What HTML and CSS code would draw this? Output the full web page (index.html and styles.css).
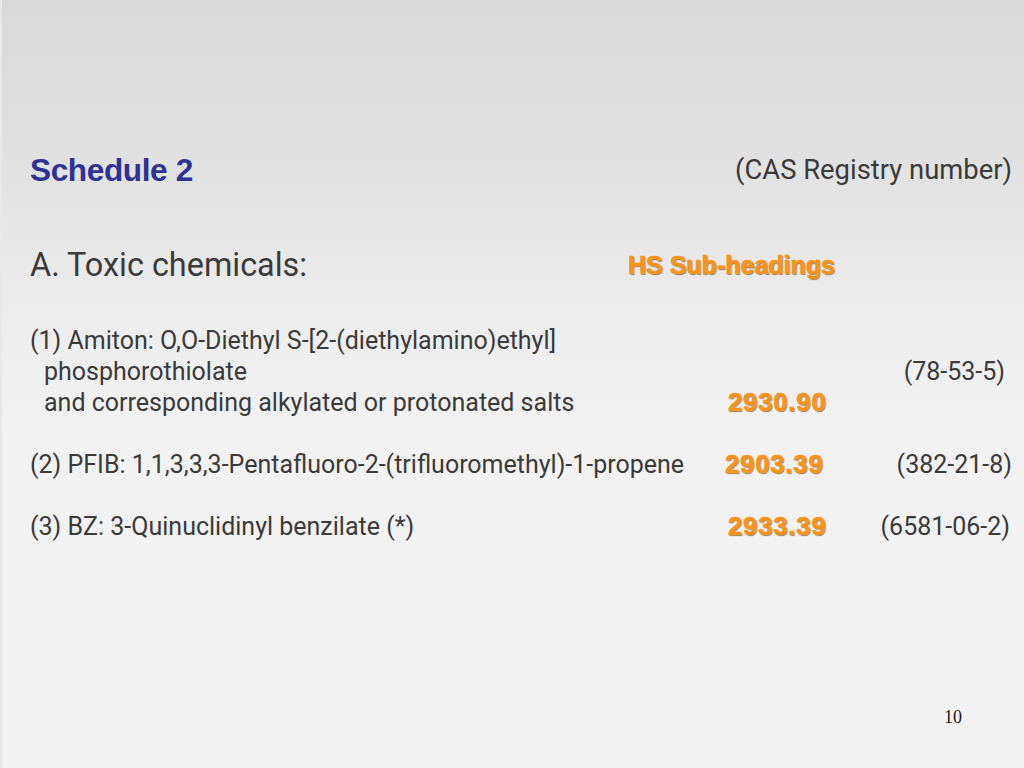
FILE: index.html
```html
<!DOCTYPE html>
<html lang="en">
<head>
<meta charset="utf-8">
<title>Schedule 2</title>
<link rel="stylesheet" href="styles.css">
</head>
<body>
<div class="slide">
  <div class="head-row">
    <h1 class="title">Schedule 2</h1>
    <span class="cas-head">(CAS Registry number)</span>
  </div>
  <div class="sub-row">
    <h2 class="section">A. Toxic chemicals:</h2>
    <span class="hs hs-head">HS Sub-headings</span>
  </div>

  <div class="entry entry-first">
    <div class="line"><span class="name">(1) Amiton: O,O-Diethyl S-[2-(diethylamino)ethyl]</span></div>
    <div class="line"><span class="name indent">phosphorothiolate</span><span class="hs"></span><span class="cas cas-short">(78-53-5)</span></div>
    <div class="line"><span class="name indent">and corresponding alkylated or protonated salts</span><span class="hs">2930.90</span></div>
  </div>

  <div class="entry">
    <div class="line"><span class="name">(2) PFIB: 1,1,3,3,3-Pentafluoro-2-(trifluoromethyl)-1-propene</span><span class="hs hs-left">2903.39</span><span class="cas">(382-21-8)</span></div>
  </div>

  <div class="entry">
    <div class="line"><span class="name">(3) BZ: 3-Quinuclidinyl benzilate (*)</span><span class="hs">2933.39</span><span class="cas cas-mid">(6581-06-2)</span></div>
  </div>

  <div class="footer">
    <span class="page-num">10</span>
  </div>
</div>
</body>
</html>
```

FILE: styles.css
```css
* { box-sizing: border-box; }

html, body {
  margin: 0;
  padding: 0;
}

body {
  width: 1024px;
  height: 768px;
  overflow: hidden;
}

.slide {
  width: 1024px;
  height: 768px;
  display: flex;
  flex-direction: column;
  padding: 150px 12px 41px 30px;
  background: linear-gradient(to bottom, #d9d9d9 0px, #dedede 120px, #e6e6e6 230px, #eeeeee 340px, #f2f2f2 440px, #f2f2f2 768px);
  box-shadow: inset 2px 0 0 #e8e8e8;
  font-family: Roboto, "Liberation Sans", sans-serif;
  color: #3a3a3a;
}

.head-row {
  display: flex;
  justify-content: space-between;
  align-items: center;
  height: 40px;
}

.title {
  margin: 0;
  font-family: "Liberation Sans", Arial, sans-serif;
  font-weight: 700;
  font-size: 31.6px;
  letter-spacing: -0.4px;
  color: #2f3194;
  line-height: 40px;
}

.cas-head {
  font-size: 27.4px;
  line-height: 40px;
}

.sub-row {
  display: grid;
  grid-template-columns: 598px auto;
  align-items: center;
  height: 40px;
  margin-top: 55px;
}

.section {
  margin: 0;
  font-weight: 400;
  font-size: 32.4px;
  line-height: 40px;
}

.hs {
  font-family: "Liberation Sans", Arial, sans-serif;
  font-weight: 700;
  color: #f7941d;
  font-size: 25.5px;
  letter-spacing: 0.9px;
  -webkit-text-stroke: 0.6px #f7941d;
  text-shadow: 1px 1px 1px rgba(70, 45, 10, 0.6);
}

.hs-head {
  font-size: 25px;
  letter-spacing: 0;
  line-height: 40px;
}

.entry {
  margin-top: 31px;
}

.entry-first {
  margin-top: 40px;
}

.line {
  display: grid;
  grid-template-columns: 698px 150px 1fr;
  align-items: center;
  height: 31px;
  font-size: 25px;
  line-height: 31px;
}

.indent {
  padding-left: 14px;
}

.hs-left {
  margin-left: -3px;
}

.cas {
  justify-self: end;
}

.cas-short {
  margin-right: 7px;
}

.cas-mid {
  margin-right: 2px;
}

.footer {
  margin-top: auto;
  display: flex;
  justify-content: flex-end;
  padding-right: 50px;
}

.page-num {
  font-family: "Liberation Serif", "Times New Roman", serif;
  font-size: 18px;
  line-height: 20px;
  color: #1a1a1a;
}
```
